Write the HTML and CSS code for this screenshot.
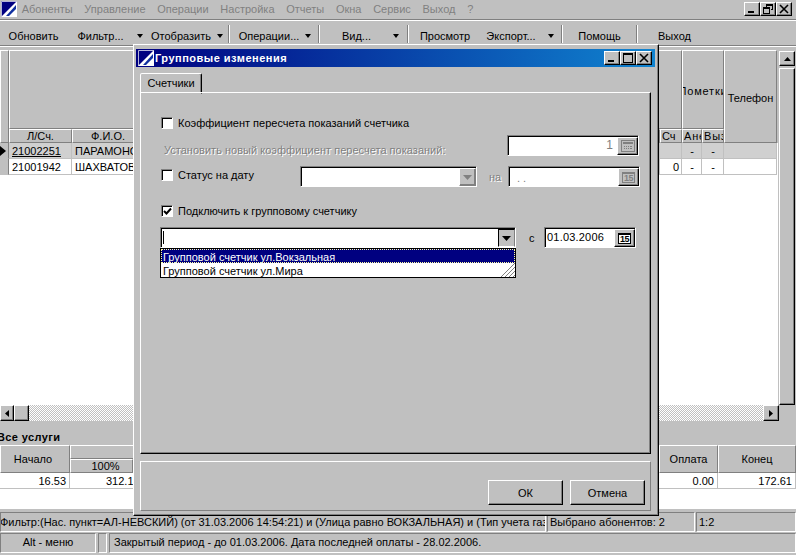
FILE: index.html
```html
<!DOCTYPE html>
<html lang="ru">
<head>
<meta charset="utf-8">
<title>Групповые изменения</title>
<link rel="stylesheet" href="styles.css">
</head>
<body>
<div class="app">
  <div class="menubar">
    <svg class="logo" width="16" height="16" viewBox="0 0 16 16"><rect width="16" height="16" fill="#000080"/><path d="M0 16 16 0v16z" fill="#fff"/><path d="M5 15 15 4v11z" fill="#1030a0"/><path d="M8 15l7-7v7z" fill="#fff"/><path d="M.5.500h15v15H.5z" fill="none" stroke="#fff" stroke-opacity=".7"/></svg>
    <span class="menu-item">Абоненты</span><span class="menu-item">Управление</span><span class="menu-item">Операции</span><span class="menu-item">Настройка</span><span class="menu-item">Отчеты</span><span class="menu-item">Окна</span><span class="menu-item">Сервис</span><span class="menu-item">Выход</span><span class="menu-item">?</span>
    <div class="win-btns">
      <span class="win-btn"><svg width="12" height="10" viewBox="0 0 12 10"><path d="M2 7h6v2H2z"/></svg></span>
      <span class="win-btn"><svg width="12" height="10" viewBox="0 0 12 10"><path d="M4 0h7v6H9v-1h1V2H5v1H4zM1 3h7v7H1zM2 5v4h5V5z"/></svg></span>
      <span class="win-btn win-btn-close"><svg width="12" height="10" viewBox="0 0 12 10"><path d="M2 1l8 8M10 1l-8 8" stroke="#000" stroke-width="1.600"/></svg></span>
    </div>
  </div>
  <div class="toolbar">
    <span class="tool t-refresh">Обновить</span>
    <span class="tool t-filter">Фильтр...</span><span class="tool-arrow t-a1"></span>
    <span class="tool t-show">Отобразить</span><span class="tool-arrow t-a2"></span><span class="tool-sep"></span>
    <span class="tool t-ops">Операции...</span><span class="tool-arrow t-a2b"></span><span class="tool-sep"></span>
    <span class="tool t-view">Вид...</span><span class="tool-arrow t-a3"></span><span class="tool-sep"></span>
    <span class="tool t-preview">Просмотр</span>
    <span class="tool t-export">Экспорт...</span><span class="tool-arrow t-a4"></span><span class="tool-sep"></span>
    <span class="tool t-help">Помощь</span><span class="tool-sep"></span>
    <span class="tool t-exit">Выход</span>
  </div>

  <div class="grid-area">
    <div class="grid-main">
      <div class="grid-rows">
        <div class="grid-head">
          <div class="ghead gh-ind"></div>
          <div class="ghead gh-wide"><div class="gh-top"></div><div class="gh-subs"><span class="gh-sub c-acc">Л/Сч.</span><span class="gh-sub c-name">Ф.И.О.</span><span class="gh-sub c-mid"></span><span class="gh-sub c-sch sch-head">Сч</span></div></div>
          <div class="ghead gh-marks"><div class="gh-top gh-label">Пометки</div><div class="gh-subs"><span class="gh-sub c-ane tight">Ане</span><span class="gh-sub c-vyz tight">Выз</span></div></div>
          <div class="ghead gh-phone">Телефон</div>
        </div>
        <div class="grow grow-current">
          <span class="gcell c-ind"><svg width="6" height="10" viewBox="0 0 6 10"><path d="M0 0l6 5-6 5z"/></svg></span>
          <span class="gcell c-acc c-link">21002251</span><span class="gcell c-name">ПАРАМОНОВ</span><span class="gcell c-mid"></span><span class="gcell c-sch"></span><span class="gcell c-ane c-center">-</span><span class="gcell c-vyz c-center">-</span><span class="gcell c-phone"></span>
        </div>
        <div class="grow">
          <span class="gcell c-ind c-ind-plain"></span>
          <span class="gcell c-acc">21001942</span><span class="gcell c-name">ШАХВАТОВ</span><span class="gcell c-mid"></span><span class="gcell c-sch c-right">0</span><span class="gcell c-ane c-center">-</span><span class="gcell c-vyz c-center">-</span><span class="gcell c-phone"></span>
        </div>
      </div>
      <div class="vscroll">
        <span class="sb-btn sb-up"><svg width="7" height="4" viewBox="0 0 7 4"><path d="M3.500 0 7 4H0z"/></svg></span>
        <span class="sb-thumb"></span>
      </div>
    </div>
    <div class="hscroll">
      <span class="sb-btn sb-left"><svg width="4" height="7" viewBox="0 0 4 7"><path d="M4 0v7L0 3.500z"/></svg></span>
      <span class="sb-btn sb-hthumb"></span>
      <span class="sb-track"></span>
      <span class="sb-btn sb-right"><svg width="4" height="7" viewBox="0 0 4 7"><path d="M0 0v7l4-3.500z"/></svg></span>
      <span class="sb-corner"></span>
    </div>
  </div>

  <div class="summary">
    <div class="sum-title">Все услуги</div>
    <div class="sum-head">
      <div class="sh s-start">Начало</div>
      <div class="sh-group"><div class="sh-group-top"></div><div class="sh-group-sub"><span class="sh-sub">100%</span></div></div>
      <div class="sh s-pay">Оплата</div>
      <div class="sh s-end">Конец</div>
    </div>
    <div class="sum-row">
      <span class="sc s-start">16.53</span><span class="sc s-group">312.17</span><span class="sc s-pay">0.00</span><span class="sc s-end">172.61</span>
    </div>
  </div>

  <div class="status s1">
    <span class="st st-filter">Фильтр:(Нас. пункт=АЛ-НЕВСКИЙ) (от 31.03.2006 14:54:21) и (Улица равно ВОКЗАЛЬНАЯ) и (Тип учета газа</span>
    <span class="st st-sel">Выбрано абонентов: 2</span>
    <span class="st st-pos">1:2</span>
  </div>
  <div class="status s2">
    <span class="st st-alt">Alt - меню</span>
    <span class="st st-tiny"></span>
    <span class="st st-period">Закрытый период - до 01.03.2006. Дата последней оплаты - 28.02.2006.</span>
  </div>
</div>

<div class="dialog">
  <div class="titlebar">
    <svg class="logo-small" width="16" height="16" viewBox="0 0 16 16"><rect width="16" height="16" fill="#000080"/><path d="M0 16 16 0v16z" fill="#fff"/><path d="M5 15 15 4v11z" fill="#1030a0"/><path d="M8 15l7-7v7z" fill="#fff"/><path d="M.5.500h15v15H.5z" fill="none" stroke="#fff" stroke-opacity=".7"/></svg>
    <span class="title-text">Групповые изменения</span>
    <div class="win-btns dlg-btns">
      <span class="win-btn"><svg width="12" height="10" viewBox="0 0 12 10"><path d="M2 7h6v2H2z"/></svg></span>
      <span class="win-btn"><svg width="12" height="10" viewBox="0 0 12 10"><path d="M1 0h10v10H1zM2 2v7h8V2z"/></svg></span>
      <span class="win-btn win-btn-close"><svg width="12" height="10" viewBox="0 0 12 10"><path d="M2 1l8 8M10 1l-8 8" stroke="#000" stroke-width="1.600"/></svg></span>
    </div>
  </div>
  <div class="tabs"><span class="tab">Счетчики</span></div>
  <div class="page">
    <div class="form-row r1">
      <span class="check"></span><span class="lbl">Коэффициент пересчета показаний счетчика</span>
    </div>
    <div class="form-row r2">
      <span class="lbl-disabled">Установить новый коэффициент пересчета показаний:</span>
      <span class="field f-num">
        <span class="field-value">1</span>
        <span class="f-btn"><svg width="14" height="12" viewBox="0 0 14 12"><rect x=".5" y=".5" width="13" height="11" fill="none" stroke="#808080"/><path d="M2 2h10v2H2z" fill="#808080"/><path d="M3 6h1v1H3zM5 6h1v1H5zM7 6h1v1H7zM9 6h2v1H9zM3 8h1v1H3zM5 8h1v1H5zM7 8h1v1H7zM9 8h2v1H9z" fill="#808080"/></svg></span>
      </span>
    </div>
    <div class="form-row r3">
      <span class="check"></span><span class="lbl l-status">Статус на дату</span>
      <span class="combo c-status"><span class="combo-btn combo-btn-dis"><svg width="9" height="5" viewBox="0 0 9 5"><path d="M0 0h9L4.500 5z" fill="#808080"/></svg></span></span>
      <span class="lbl-na">на</span>
      <span class="field f-date-dis">
        <span class="field-dots">. .</span>
        <span class="f-btn"><span class="cal cal-dis">15</span></span>
      </span>
    </div>
    <div class="form-row r4">
      <span class="check"><svg width="9" height="9" viewBox="0 0 9 9"><path d="M1 4l2.500 2.500L8 1.500" fill="none" stroke="#000" stroke-width="2"/></svg></span><span class="lbl">Подключить к групповому счетчику</span>
    </div>
    <div class="form-row r5">
      <div class="combo-wrap">
        <span class="combo c-group"><span class="caret"></span><span class="combo-btn combo-btn-open"><svg width="9" height="5" viewBox="0 0 9 5"><path d="M0 0h9L4.500 5z"/></svg></span></span>
        <div class="dropdown">
          <div class="dd-item dd-selected">Групповой счетчик ул.Вокзальная</div>
          <div class="dd-item">Групповой счетчик ул.Мира</div>
          <svg class="dd-grip" width="14" height="14" viewBox="0 0 14 14"><path d="M0 14 14 0M4 14 14 4M8 14l6-6M12 14l2-2" stroke="#808080" fill="none"/></svg>
        </div>
      </div>
      <span class="lbl-c">с</span>
      <span class="field f-date">
        <span class="date-value">01.03.2006</span>
        <span class="f-btn"><span class="cal">15</span></span>
      </span>
    </div>
  </div>
  <div class="divider"></div>
  <div class="footer">
    <button class="btn" type="button">ОК</button>
    <button class="btn" type="button">Отмена</button>
  </div>
</div>
</body>
</html>
```
FILE: styles.css
```css
* { box-sizing: border-box; }
html, body { margin: 0; padding: 0; }
body {
  width: 796px;
  height: 555px;
  overflow: hidden;
  background: #c0c0c0;
  font: 11px "Liberation Sans", Arial, sans-serif;
  color: #000;
  position: relative;
}
.app { width: 796px; height: 555px; display: flex; flex-direction: column; background: #c0c0c0; }

/* menu */
.menubar {
  height: 20px; display: flex; align-items: center; gap: 11.700px;
  padding: 0 0 2px 1px; border-bottom: 1px solid #808080; box-shadow: 0 1px 0 #fff;
  flex: none;
}
.logo { flex: none; margin-right: -7px; }
.menu-item { color: #808080; white-space: nowrap; }
.win-btns { margin-left: auto; display: flex; padding-right: 4px; }
.win-btn {
  width: 16px; height: 14px; display: flex; align-items: center; justify-content: center;
  background: #c0c0c0; border: 1px solid; border-color: #fff #000 #000 #fff;
  box-shadow: inset -1px -1px 0 #808080;
}
.win-btn svg { display: block; }

/* toolbar */
.toolbar {
  height: 26px; display: flex; align-items: center; flex: none; padding-top: 6px;
  border-bottom: 1px solid #808080; box-shadow: 0 1px 0 #fff;
}
.tool { white-space: nowrap; text-align: center; flex: none; }
.t-refresh { width: 67px; }
.t-filter { width: 67px; }
.tool-arrow { flex: none; position: relative; height: 8px; }
.tool-arrow::after {
  content: ""; position: absolute; top: 2px;
  border-left: 3.500px solid transparent; border-right: 3.500px solid transparent; border-top: 4px solid #000;
}
.t-a1 { width: 16px; }
.t-a1::after { left: 3px; }
.t-show { width: 62px; }
.t-a2 { width: 16px; }
.t-a2::after { left: 5px; }
.tool-sep { flex: none; width: 2px; height: 18px; margin-top: -3px; border-left: 1px solid #808080; border-right: 1px solid #fff; }
.t-ops { width: 78px; }
.t-a2b { width: 10px; }
.t-a2b::after { left: -3px; }
.t-view { width: 73px; }
.t-a3 { width: 14px; }
.t-a3::after { left: 0; }
.t-preview { width: 72px; }
.t-export { width: 60px; }
.t-a4 { width: 20px; }
.t-a4::after { left: 7px; }
.t-help { width: 73px; }
.t-exit { width: 73px; }

/* main grid */
.grid-area { flex: none; height: 371px; margin-top: 4px; }
.grid-main { height: 355px; display: flex; background: #fff; }
.grid-rows { flex: none; width: 778px; }
.grid-head { height: 93px; display: flex; background: #c0c0c0; }
.ghead { border: 1px solid; border-color: #fff #808080 #808080 #fff; }
.gh-ind { width: 9px; }
.gh-wide { width: 673px; display: flex; flex-direction: column; border: none; }
.gh-top { flex: 1; border: 1px solid; border-color: #fff #808080 #808080 #fff; }
.gh-subs { height: 14px; display: flex; flex: none; }
.gh-sub { display: block; text-align: center; line-height: 12px; border: 1px solid; border-color: #fff #808080 #808080 #fff; flex: none; overflow: hidden; white-space: nowrap; }
.sch-head { text-align: left; padding-left: 1px; }
.tight { text-align: left; letter-spacing: .8px; padding-left: 1px; }
.gh-marks { width: 42px; display: flex; flex-direction: column; border: none; }
.gh-label { display: flex; align-items: center; justify-content: center; overflow: hidden; white-space: nowrap; padding-top: 3px; letter-spacing: .8px; }
.gh-phone { width: 53px; display: flex; align-items: center; justify-content: center; padding-top: 2px; }
.c-acc { width: 63px; }
.c-name { width: 72px; }
.c-mid { width: 516px; }
.c-sch { width: 22px; }
.c-ane { width: 20px; }
.c-vyz { width: 22px; }
.c-phone { width: 53px; }
.c-ind { width: 9px; background: #c0c0c0; display: flex; align-items: center; }
.grow { height: 16px; display: flex; background: #fff; }
.grow-current .gcell { background: #d0d0d0; }
.grow-current .c-ind { background: #c0c0c0; }
.gcell {
  flex: none; height: 16px; line-height: 16px; padding: 0 2px 0 3px;
  border-right: 1px solid #c0c0c0; border-bottom: 1px solid #c0c0c0;
  white-space: nowrap; overflow: hidden;
}
.gcell.c-ind { padding: 0; border-right: 1px solid #808080; }
.c-link { text-decoration: underline; }
.c-center { text-align: center; }
.c-right { text-align: right; }
.vscroll { flex: none; width: 18px; background: #c0c0c0; display: flex; flex-direction: column; padding: 1px 0 0 1px; }
.sb-btn {
  flex: none; width: 16px; height: 16px; display: flex; align-items: center; justify-content: center;
  background: #c0c0c0; border: 1px solid; border-color: #fff #000 #000 #fff;
  box-shadow: inset -1px -1px 0 #808080;
}
.sb-up { height: 15px; }
.sb-thumb { flex: 1; margin-top: 2px; width: 16px; border: 1px solid; border-color: #fff #000 #000 #fff; box-shadow: inset -1px -1px 0 #808080; }
.hscroll { height: 16px; display: flex; background: #c0c0c0; }
.sb-left { width: 14px; }
.sb-hthumb { width: 15px; }
.sb-right { width: 16px; }
.sb-track {
  flex: none; width: 734px; height: 16px;
  background-color: #fff;
  background-image: conic-gradient(#c0c0c0 25%, #fff 0 50%, #c0c0c0 0 75%, #fff 0);
  background-size: 2px 2px;
}
.sb-corner { flex: 1; }

/* summary */
.summary { flex: none; height: 88px; display: flex; flex-direction: column; }
.sum-title { height: 24px; font-weight: bold; line-height: 32px; margin-left: -3px; letter-spacing: .4px; white-space: nowrap; }
.sum-head { height: 28px; display: flex; flex: none; }
.sh { flex: none; display: flex; align-items: center; justify-content: center; border: 1px solid; border-color: #fff #808080 #808080 #fff; }
.sh.s-start { padding-right: 4px; }
.s-start { width: 70px; }
.s-pay { width: 59px; }
.s-end { width: 78px; }
.sh-group { width: 589px; display: flex; flex-direction: column; flex: none; }
.sh-group-top { height: 14px; border: 1px solid; border-color: #fff #808080 #808080 #fff; }
.sh-group-sub { height: 14px; display: flex; }
.sh-sub { width: 63px; text-align: center; line-height: 12px; padding-left: 8px; border: 1px solid; border-color: #fff #808080 #808080 #fff; }
.s-group { width: 589px; }
.sum-row { height: 36px; background: #fff; display: flex; flex: none; align-items: flex-start; }
.sc { flex: none; height: 16px; line-height: 16px; text-align: right; padding-right: 3px; border-right: 1px solid #c0c0c0; border-bottom: 1px solid #c0c0c0; }
.sc.s-group { text-align: left; padding-left: 36px; }

/* status */
.status { display: flex; flex: none; gap: 1px; }
.s1 { height: 20px; margin-top: 3px; line-height: 18px; }
.s2 { height: 20px; margin-top: 1px; line-height: 17px; }
.st {
  display: block; height: 100%; padding: 0 2px; white-space: nowrap; overflow: hidden;
  border: 1px solid; border-color: #808080 #fff #fff #808080; flex: none;
}
.st-filter { width: 546px; padding-left: 0; text-indent: -1px; }
.st-sel { width: 148px; }
.st-pos { width: 100px; }
.st-alt { width: 96px; text-align: center; margin-right: 1px; }
.st-tiny { width: 9px; margin-right: 1px; }
.st-period { width: 687px; padding-left: 4px; }

/* dialog */
.dialog {
  position: absolute; left: 133px; top: 44px; width: 526px; height: 472px;
  background: #c0c0c0; padding: 4px 3px 3px 2px;
  border: 1px solid; border-color: #fff #000 #000 #fff;
  box-shadow: inset -1px -1px 0 #808080;
  display: flex; flex-direction: column;
}
.titlebar {
  height: 18px; flex: none; display: flex; align-items: center; padding: 0 2px 0 2px;
  background: linear-gradient(90deg, #000080, #1084d0);
}
.logo-small { flex: none; margin-right: 1px; }
.title-text { color: #fff; font-weight: bold; white-space: nowrap; letter-spacing: .5px; }
.dlg-btns { padding-right: 1px; }
.tabs { height: 26px; flex: none; padding: 6px 0 0 4px; display: flex; }
.tab {
  width: 62px; height: 21px; line-height: 19px; text-align: center;
  background: #c0c0c0; border: 1px solid; border-color: #fff #000 transparent #fff; border-radius: 2px 2px 0 0;
  box-shadow: inset -1px 0 0 #808080;
}
.page {
  margin: -1px 4px 0 4px; height: 362px; flex: none; padding-top: 24px;
  border: 1px solid; border-color: #fff #000 #000 #fff;
  box-shadow: inset -1px -1px 0 #808080;
}
.form-row { display: flex; align-items: center; padding-left: 20px; }
.r1 { height: 12px; }
.r2 { height: 21px; margin-top: 6px; padding-left: 23px; }
.r3 { height: 21px; margin-top: 10px; }
.r4 { height: 12px; margin-top: 18px; }
.r5 { height: 21px; margin-top: 10px; align-items: flex-start; padding-left: 19px; }
.r3 > .check, .r3 > .l-status { margin-top: -4px; }
.check {
  flex: none; width: 12px; height: 12px; background: #fff; border: 1px solid; border-color: #808080 #fff #fff #808080;
  box-shadow: inset 1px 1px 0 #000; display: flex; align-items: center; justify-content: center;
}
.lbl { margin-left: 5px; white-space: nowrap; }
.l-status { width: 122px; }
.lbl-disabled { color: #808080; text-shadow: 1px 1px 0 #fff; width: 343px; white-space: nowrap; letter-spacing: .02px; margin-top: 8px; }
.field, .combo {
  display: flex; align-items: stretch; background: #fff; flex: none;
  border: 1px solid; border-color: #808080 #fff #fff #808080;
  box-shadow: inset 1px 1px 0 #000;
}
.f-num { width: 132px; height: 21px; }
.field-value { flex: 1; text-align: right; color: #808080; padding-right: 4px; line-height: 18px; font-size: 12px; }
.f-btn {
  flex: none; width: 21px; margin: 1px 0 0 0; display: flex; align-items: center; justify-content: center;
  background: #c0c0c0; border: 1px solid; border-color: #fff #000 #000 #fff; box-shadow: inset -1px -1px 0 #808080;
}
.c-status { width: 177px; height: 21px; justify-content: flex-end; }
.combo-btn {
  flex: none; width: 17px; margin-top: 1px; display: flex; align-items: center; justify-content: center;
  background: #c0c0c0; border: 1px solid; border-color: #fff #000 #000 #fff; box-shadow: inset -1px -1px 0 #808080;
}
.combo-btn-dis { border-color: #fff #808080 #808080 #fff; }
.combo-btn-open { border-color: #000 #808080 #fff #000; box-shadow: none; }
.lbl-na { color: #808080; margin-left: 12px; width: 19px; text-shadow: 1px 1px 0 #fff; }
.f-date-dis { width: 132px; height: 21px; justify-content: space-between; }
.field-dots { color: #808080; padding-left: 8px; line-height: 22px; }
.cal {
  display: block; width: 13px; height: 11px; font-size: 9px; line-height: 8px; text-align: center; font-weight: bold;
  background: #fff; border: 1px solid #000; border-top-width: 2px; letter-spacing: -.5px;
}
.cal-dis { background: #c0c0c0; color: #808080; border-color: #808080; }
.combo-wrap { width: 356px; position: relative; flex: none; }
.c-group { width: 356px; height: 21px; align-items: center; justify-content: space-between; }
.caret { width: 1px; height: 13px; background: #000; margin-left: 2px; }
.c-group .combo-btn { align-self: stretch; }
.dropdown {
  position: absolute; left: 0; top: 21px; width: 356px; height: 30px; background: #fff;
  border: 1px solid #000;
}
.dd-item { height: 14px; line-height: 16px; padding-left: 2px; white-space: nowrap; }
.dd-selected { background: #000080; color: #fff; outline: 1px dotted #ffffa0; outline-offset: -1px; }
.dd-grip { position: absolute; right: 0; bottom: 0; }
.lbl-c { margin-left: 13px; width: 15px; line-height: 22px; }
.f-date { width: 92px; height: 21px; justify-content: space-between; }
.date-value { padding-left: 2px; line-height: 18px; letter-spacing: .2px; }
.divider { flex: none; height: 7px; margin: 0 4px; }
.footer {
  margin: 0 4px; flex: none; height: 50px; border: 1px solid; border-color: #fff #808080 #808080 #fff;
  display: flex; justify-content: flex-end; gap: 7px; padding: 18px 5px 0 0;
}
.btn {
  width: 75px; height: 25px; font: inherit; background: #c0c0c0; padding: 0; color: #000;
  border: 1px solid; border-color: #fff #000 #000 #fff; box-shadow: inset -1px -1px 0 #808080;
}
```
